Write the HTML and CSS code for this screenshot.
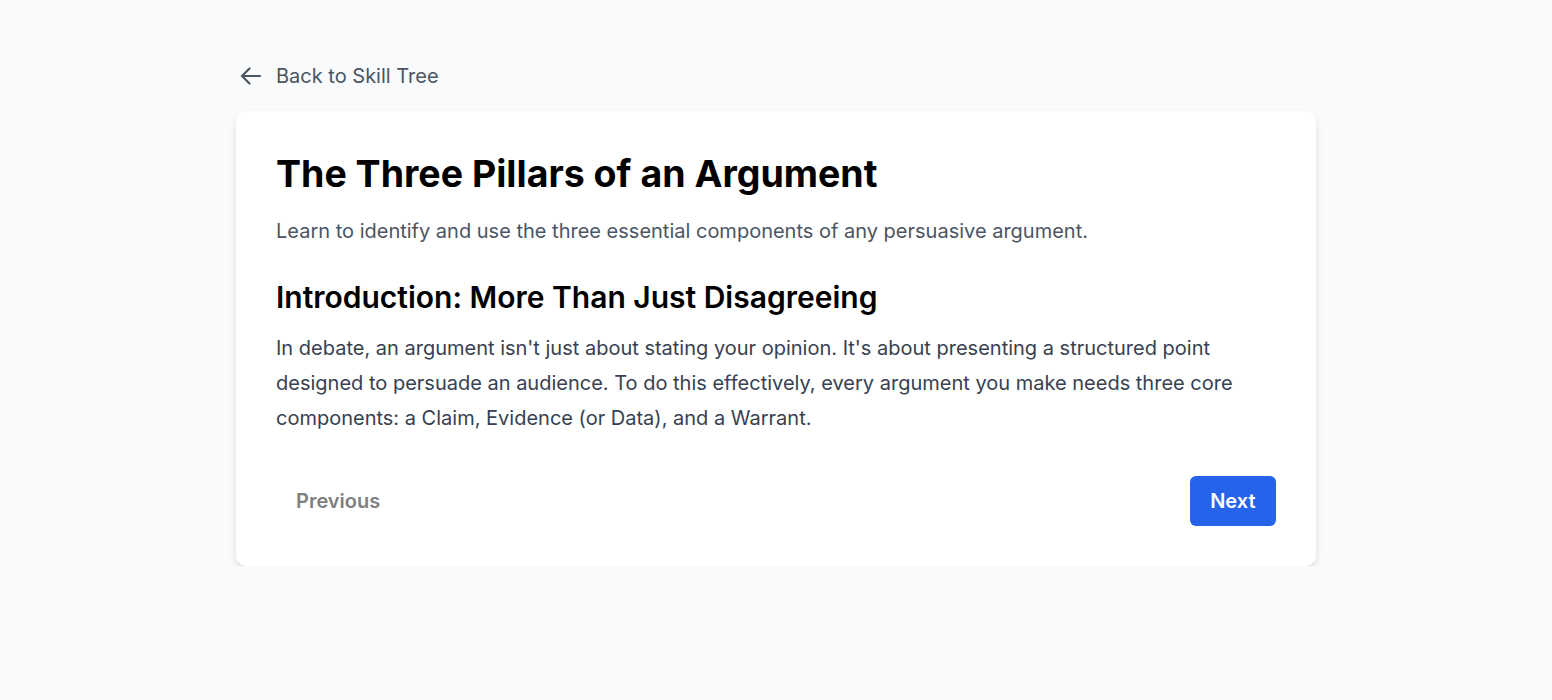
FILE: index.html
```html
<!DOCTYPE html>
<html lang="en">
<head>
<meta charset="utf-8">
<title>The Three Pillars of an Argument</title>
<link rel="stylesheet" href="styles.css">
</head>
<body>
<div class="page">
  <a class="back" href="#">
    <svg class="back-icon" width="24" height="24" viewBox="0 0 24 24" fill="none" stroke="currentColor" stroke-width="2.2" stroke-linecap="round" stroke-linejoin="round"><path d="M10.5 19.5L3 12l7.5-7.5M3 12h18"/></svg>
    <span>Back to Skill Tree</span>
  </a>
  <main class="card">
    <h1 class="title">The Three Pillars of an Argument</h1>
    <p class="subtitle">Learn to identify and use the three essential components of any persuasive argument.</p>
    <h2 class="section-title">Introduction: More Than Just Disagreeing</h2>
    <p class="body-text">In debate, an argument isn't just about stating your opinion. It's about presenting a structured point designed to persuade an audience. To do this effectively, every argument you make needs three core components: a Claim, Evidence (or Data), and a Warrant.</p>
    <div class="nav">
      <button class="btn btn-prev">Previous</button>
      <button class="btn btn-next">Next</button>
    </div>
  </main>
</div>
</body>
</html>
```
FILE: styles.css
```css
* { box-sizing: border-box; }
html, body { margin: 0; padding: 0; }
body {
  background: #f9fafb;
  font-family: Inter, "Noto Sans", sans-serif;
  color: #111827;
}
.page {
  width: 1080px;
  margin: 0 auto;
  padding-top: 62px;
}
.back {
  display: flex;
  width: max-content;
  align-items: center;
  gap: 13px;
  color: #4b5563;
  text-decoration: none;
  font-size: 20px;
  line-height: 28px;
  padding-left: 3px;
  margin-bottom: 21px;
}
.back-icon { display: block; }
.card {
  background: #fff;
  border-radius: 10px;
  box-shadow: 0 4px 8px -1px rgba(0,0,0,0.12), 0 2px 4px -2px rgba(0,0,0,0.1);
  padding: 40px;
}
.title {
  margin: 0;
  font-size: 37.5px;
  line-height: 40px;
  font-weight: 700;
  color: #000;
  padding-top: 3px;
}
.subtitle {
  margin: 23px 0 0;
  font-size: 20px;
  line-height: 28px;
  color: #4b5563;
}
.section-title {
  margin: 34px 0 0;
  font-size: 30px;
  line-height: 36px;
  font-weight: 600;
  color: #000;
}
.body-text {
  margin: 16px 0 0;
  font-size: 20px;
  line-height: 35px;
  color: #374151;
}
.nav {
  display: flex;
  justify-content: space-between;
  align-items: center;
  margin-top: 40px;
}
.btn {
  font-family: inherit;
  font-size: 20px;
  line-height: 26px;
  font-weight: 600;
  border: none;
  border-radius: 6px;
  padding: 12px 20px;
  cursor: pointer;
}
.btn-prev { background: transparent; color: #7f7f7f; }
.btn-next { background: #2563eb; color: #fff; padding: 12px 20.5px; }
```
